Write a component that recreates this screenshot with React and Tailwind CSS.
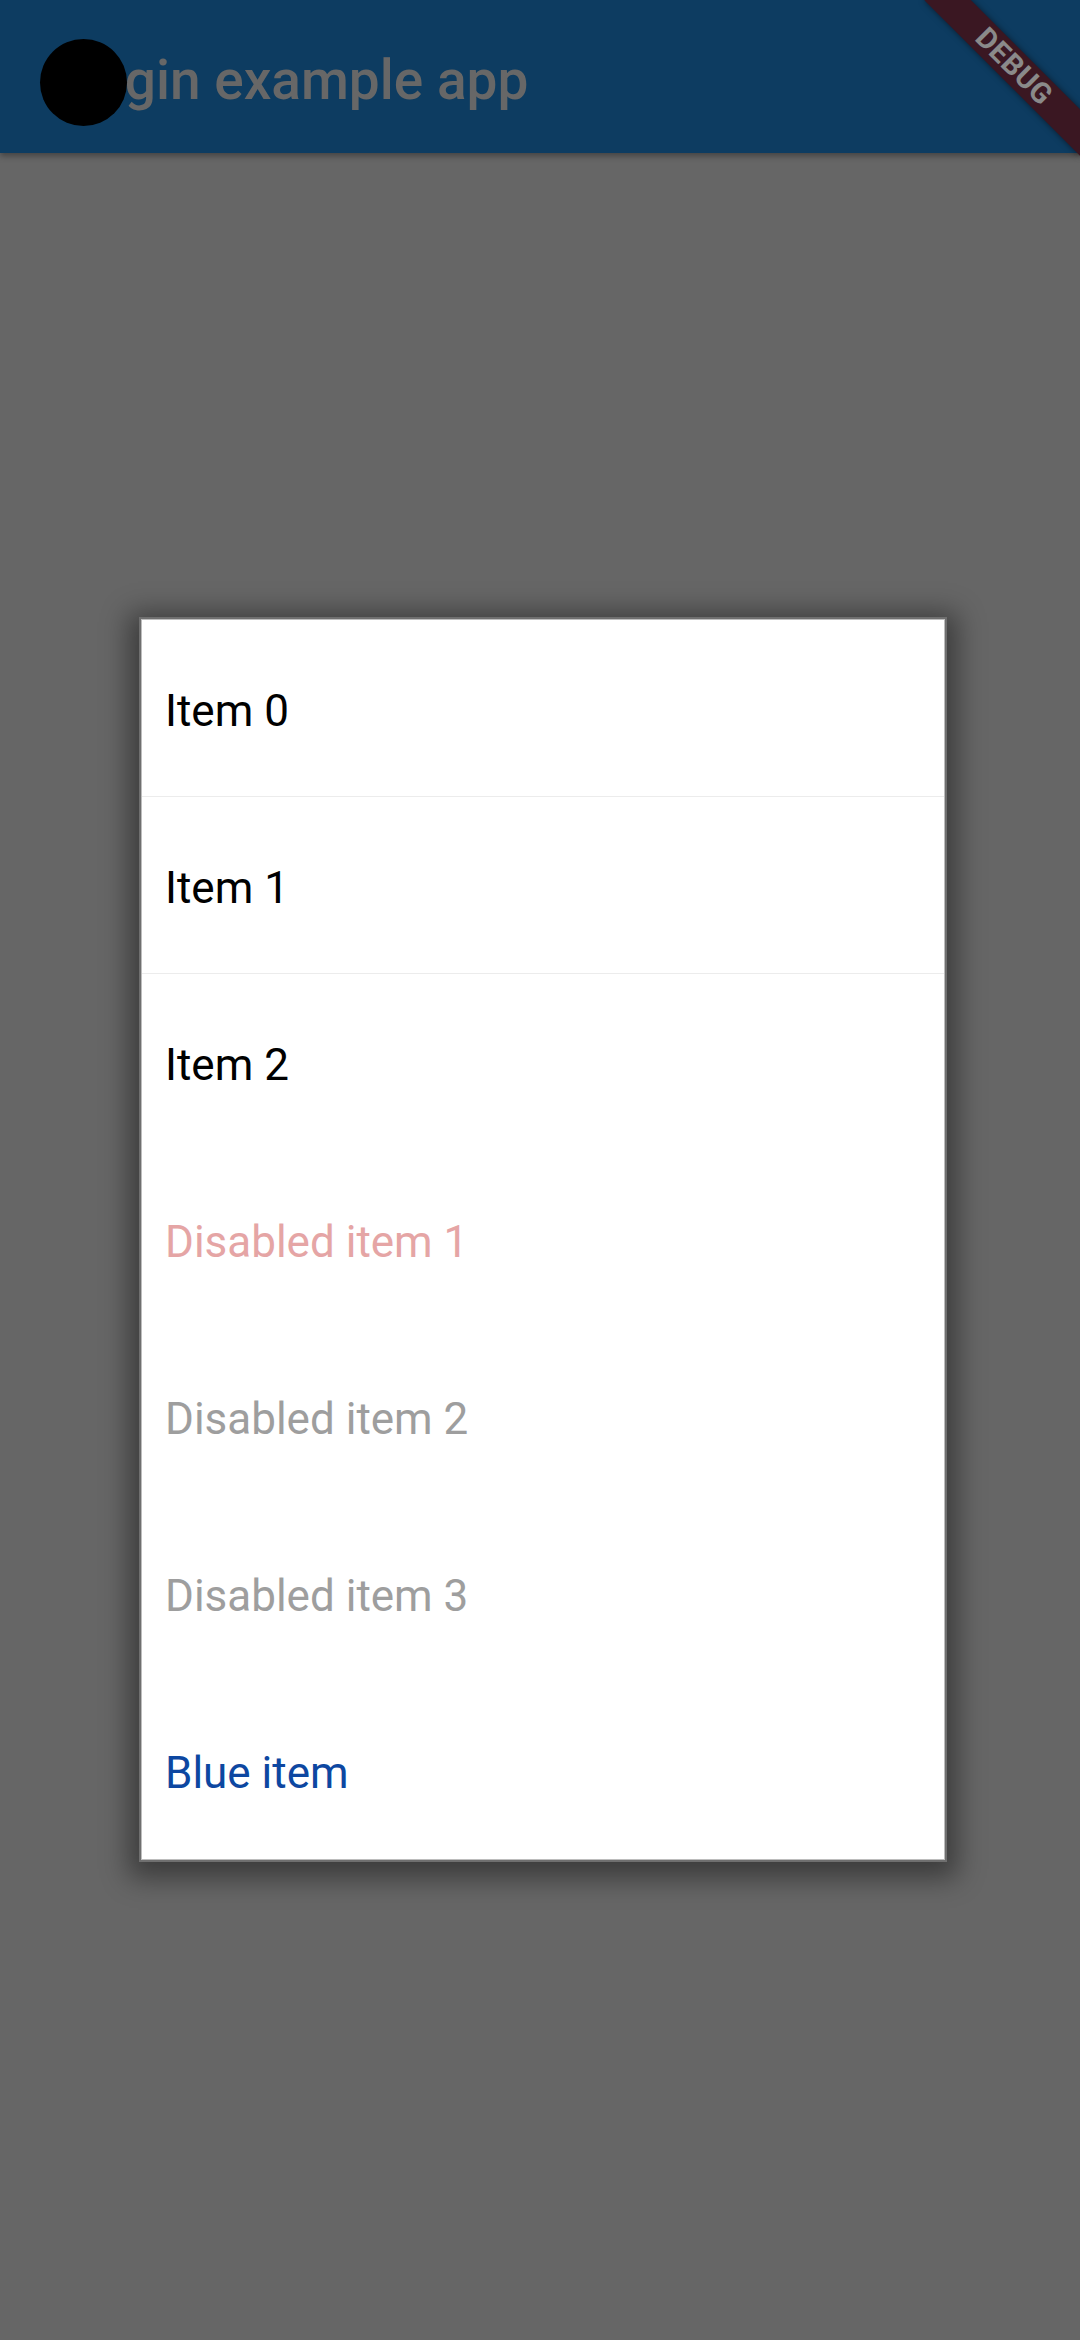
import React from "react";

const items = [
  { label: "Item 0", color: "text-black", divider: true },
  { label: "Item 1", color: "text-black", divider: true },
  { label: "Item 2", color: "text-black", divider: false },
  { label: "Disabled item 1", color: "text-[#e5a5a5]", divider: false },
  { label: "Disabled item 2", color: "text-[#9e9e9e]", divider: false },
  { label: "Disabled item 3", color: "text-[#9e9e9e]", divider: false },
  { label: "Blue item", color: "text-[#0d47a1]", divider: false },
];

export default function App() {
  return (
    <div
      className="relative w-[1080px] h-[2340px] overflow-hidden bg-[#666666] flex flex-col"
      style={{ fontFamily: "Roboto, 'Noto Sans', sans-serif" }}
    >
      {/* App bar */}
      <div className="relative z-10 h-[153px] shrink-0 bg-[#0d3c61] shadow-[0_3px_6px_rgba(0,0,0,0.35)] pl-[45px] pt-[48px]">
        <div className="text-[55px] leading-[64px] font-medium text-[#676767] whitespace-nowrap">
          Plugin example app
        </div>
        {/* black touch circle */}
        <div className="absolute left-[40px] top-[39px] w-[87px] h-[87px] rounded-full bg-black" />
      </div>

      {/* Body with dialog */}
      <div className="flex-1 pt-[464px]">
        <div className="ml-[139px] w-[808px] p-[2px] bg-[#6f6f6f] shadow-[0_6px_26px_10px_rgba(0,0,0,0.42)]">
          <div className="border border-[#bdbdbd] bg-white flex flex-col">
            {items.map((it) => (
              <div
                key={it.label}
                className={`h-[177px] flex items-center pl-[23px] pt-[5px] ${
                  it.divider ? "border-b border-[#ececec]" : ""
                }`}
              >
                <span className={`text-[44px] leading-[52px] ${it.color}`}>
                  {it.label}
                </span>
              </div>
            ))}
          </div>
        </div>
      </div>

      {/* DEBUG banner */}
      <div className="absolute left-[904px] top-[50px] w-[220px] h-[33px] rotate-45 bg-[#3a1722] shadow-[0_0_6px_rgba(0,0,0,0.5)] z-20 flex items-center justify-center">
        <span className="text-[29px] leading-[33px] font-bold text-[#8a8a8a] tracking-[0.5px]">
          DEBUG
        </span>
      </div>
    </div>
  );
}
